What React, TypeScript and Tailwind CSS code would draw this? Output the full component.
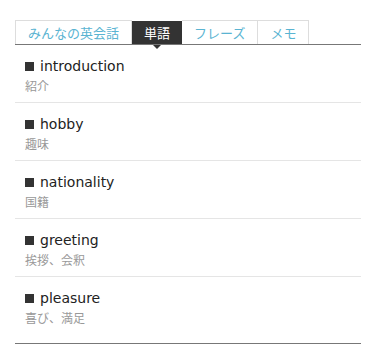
import React from "react";

const tabs = ["みんなの英会話", "単語", "フレーズ", "メモ"];
const words = [
  { en: "introduction", ja: "紹介" },
  { en: "hobby", ja: "趣味" },
  { en: "nationality", ja: "国籍" },
  { en: "greeting", ja: "挨拶、会釈" },
  { en: "pleasure", ja: "喜び、満足" },
];

export default function App() {
  return (
    <div className="w-[376px] h-[353px] bg-white pt-[20px] px-[15px]" style={{ fontFamily: '"Noto Sans CJK JP", sans-serif' }}>
      <div className="border-b border-[#777] pb-[9px]">
        <div className="flex border-b border-[#777] h-[25px]">
          {tabs.map((t, i) =>
            i === 1 ? (
              <div key={t} className="relative h-[23px] mt-[1px] px-[12px] bg-[#333] text-white text-[13px] leading-[23px]">
                {t}
                <span className="absolute left-1/2 -translate-x-1/2 top-[24px] w-0 h-0 border-l-[4px] border-r-[4px] border-t-[4px] border-l-transparent border-r-transparent border-t-[#333]" />
              </div>
            ) : (
              <div key={t} className={"h-[24px] px-[12px] border-t border-r border-[#ddd] text-[#5ab4d2] text-[13px] leading-[23px] " + (i === 0 ? "border-l" : "")}>
                {t}
              </div>
            )
          )}
        </div>
        {words.map((w, i) => (
          <div key={w.en} className={"pt-[13px] pb-[8px] px-[10px] " + (i < words.length - 1 ? "border-b border-[#e5e5e5]" : "")}>
            <div className="flex items-center h-[16px] text-[14px] text-[#222]" style={{ fontFamily: '"DejaVu Sans", sans-serif' }}>
              <span className="inline-block w-[9px] h-[9px] bg-[#333] mr-[6px]" />
              {w.en}
            </div>
            <div className="mt-[4px] h-[16px] leading-[16px] text-[12px] text-[#999]">{w.ja}</div>
          </div>
        ))}
      </div>
    </div>
  );
}
